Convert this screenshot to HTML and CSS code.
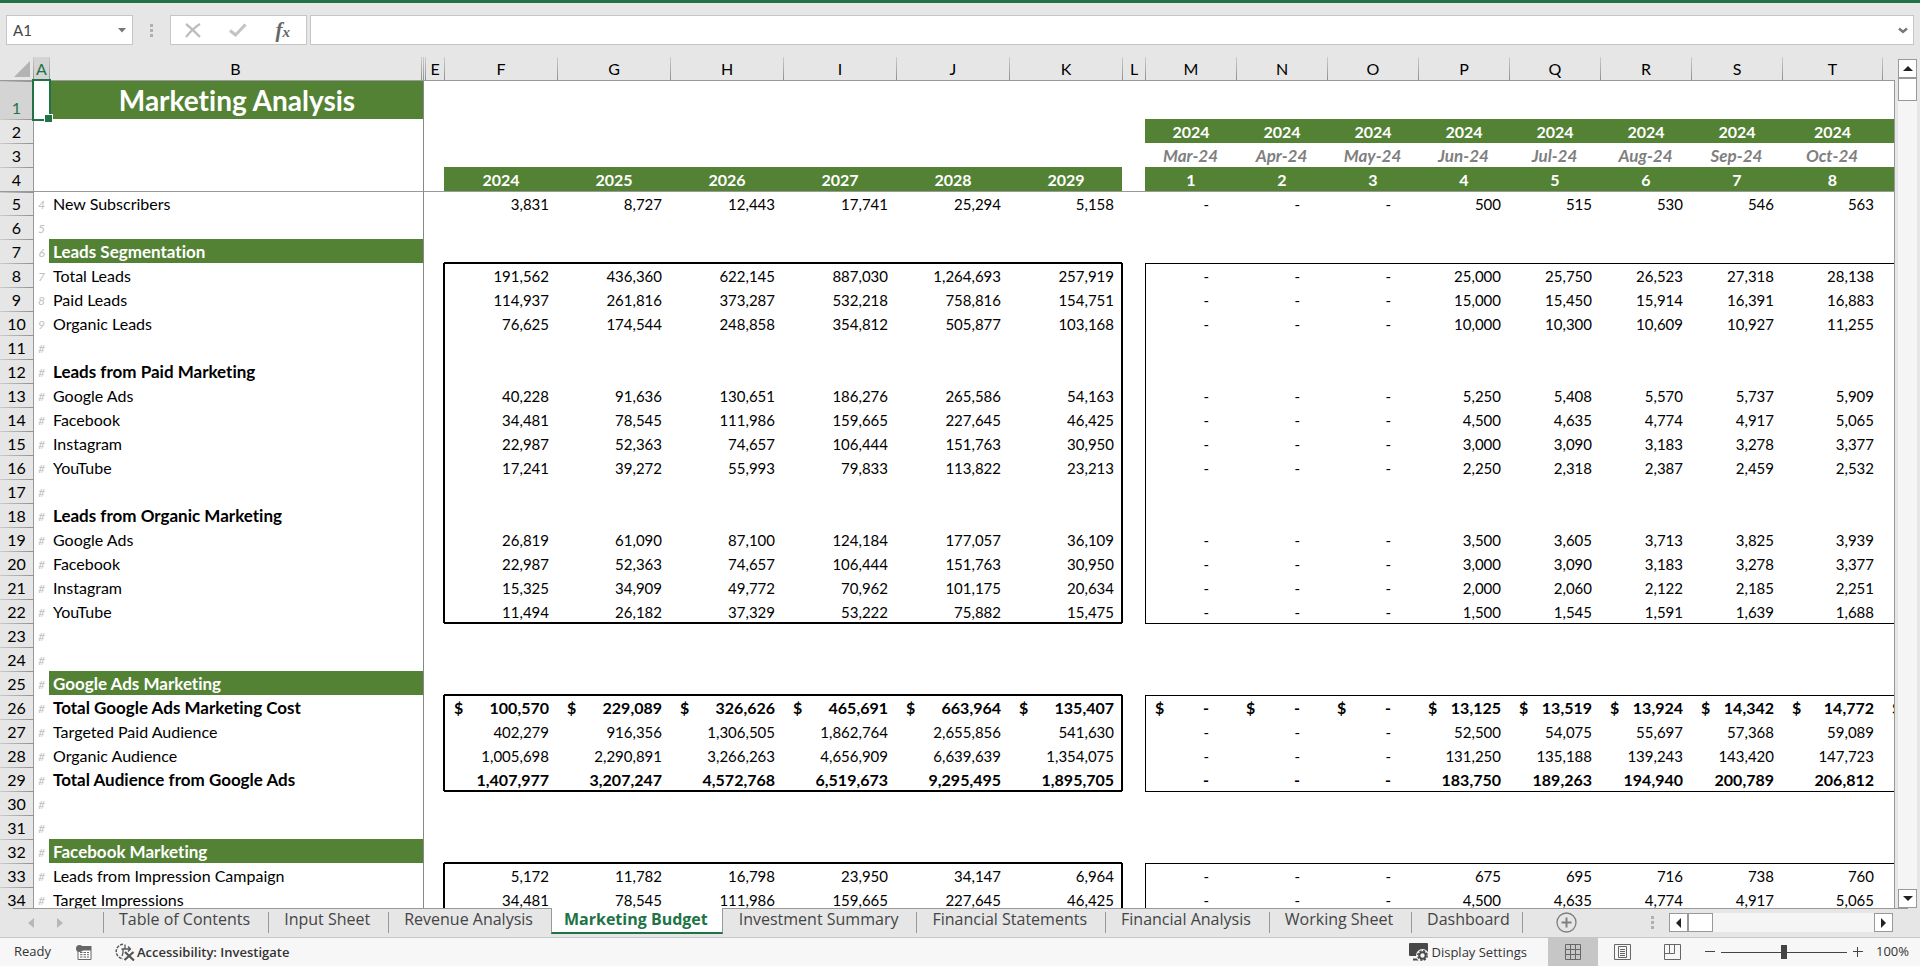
FILE: index.html
```html
<!DOCTYPE html>
<html lang="en">
<head>
<meta charset="utf-8">
<title>Marketing Analysis</title>
<link rel="stylesheet" href="styles.css">
</head>
<body>
<header class="formula-bar">
  <div class="name-box">
    <input class="name-input" type="text" value="A1" aria-label="Name box">
    <button class="plain" aria-label="Name list"><svg width="8" height="5" viewBox="0 0 8 5"><path d="M0 0h8L4 4.5z" fill="#777"/></svg></button>
  </div>
  <div class="dots"><i></i><i></i><i></i></div>
  <div class="fx-box">
    <button class="plain" aria-label="Cancel"><svg width="16" height="15" viewBox="0 0 16 15" fill="none" stroke="#bdbdbd" stroke-width="2.2"><path d="M1 1c4 3 9 8 14 13M15 1C10 4 5 9 1 14"/></svg></button>
    <button class="plain" aria-label="Enter"><svg width="18" height="14" viewBox="0 0 18 14" fill="none" stroke="#c3c3c3" stroke-width="3"><path d="M1 7.500l5.500 4.500L16.500 1.500"/></svg></button>
    <button class="plain fx" aria-label="Insert function">f<span class="fx-x">x</span></button>
  </div>
  <div class="formula-box">
    <input class="formula-input" type="text" aria-label="Formula bar">
    <button class="plain" aria-label="Expand formula bar"><svg width="10" height="7" viewBox="0 0 10 7" fill="none" stroke="#777" stroke-width="2.400"><path d="M1 1.500l4 3.500 4-3.500"/></svg></button>
  </div>
</header>

<main class="sheet">
  <div class="grid"><table class="cells" id="cells"></table></div>
  <div class="vscroll">
    <button class="scroll-btn" aria-label="Scroll up"><svg width="10" height="5" viewBox="0 0 10 5"><path d="M5 0l5 5H0z" fill="#222"/></svg></button>
    <div class="vthumb"></div>
    <div class="track"></div>
    <button class="scroll-btn" aria-label="Scroll down"><svg width="10" height="5" viewBox="0 0 10 5"><path d="M0 0h10L5 5z" fill="#222"/></svg></button>
  </div>
</main>

<nav class="tab-bar">
  <div class="tab-nav">
    <button class="plain" aria-label="Previous sheet"><svg width="6" height="10" viewBox="0 0 6 10"><path d="M6 0v10L0 5z" fill="#b8b8b8"/></svg></button>
    <button class="plain" aria-label="Next sheet"><svg width="6" height="10" viewBox="0 0 6 10"><path d="M0 0v10l6-5z" fill="#b8b8b8"/></svg></button>
  </div>
  <button class="tab">Table of Contents</button>
  <button class="tab">Input Sheet</button>
  <button class="tab">Revenue Analysis</button>
  <button class="tab active">Marketing Budget</button>
  <button class="tab">Investment Summary</button>
  <button class="tab">Financial Statements</button>
  <button class="tab">Financial Analysis</button>
  <button class="tab">Working Sheet</button>
  <button class="tab last">Dashboard</button>
  <button class="plain add" aria-label="New sheet"><svg width="21" height="21" viewBox="0 0 21 21" fill="none" stroke="#808080"><circle cx="10.500" cy="10.500" r="9.500" stroke-width="1.300"/><path d="M10.500 5.500v10M5.500 10.500h10" stroke-width="2"/></svg></button>
  <div class="tab-right">
    <div class="dots"><i></i><i></i><i></i></div>
    <div class="hscroll">
      <button class="scroll-btn" aria-label="Scroll left"><svg width="5" height="10" viewBox="0 0 5 10"><path d="M5 0v10L0 5z" fill="#222"/></svg></button>
      <div class="hthumb"></div>
      <div class="track"></div>
      <button class="scroll-btn" aria-label="Scroll right"><svg width="5" height="10" viewBox="0 0 5 10"><path d="M0 0v10l5-5z" fill="#222"/></svg></button>
    </div>
  </div>
</nav>

<footer class="status">
  <span class="ready">Ready</span>
  <button class="plain macro" aria-label="Record macro"><svg width="16" height="15" viewBox="0 0 16 15"><path d="M2 5h13v9.500H2z" fill="#fff" stroke="#666"/><path d="M6 1h9.500v4H6z" fill="#666"/><circle cx="3.500" cy="3.500" r="3.500" fill="#666"/><path d="M4 7.500h9M4 9.700h9M4 12h9" stroke="#666" stroke-dasharray="2.500 1"/></svg></button>
  <button class="plain access"><svg width="20" height="18" viewBox="0 0 20 18" fill="none" stroke="#555"><path d="M8 1.200A7.500 7.500 0 0 0 1.200 8.500A7.500 7.500 0 0 0 8 15.800" stroke-width="1.500" stroke-dasharray="3 1.200"/><path d="M10 1.500v5M6.500 6H15M13 3.500L15.500 6 13 8.500M8 6v4l-1 3" stroke-width="1.300"/><path d="M10 9l9 8.500M18.500 9L9.500 17" stroke-width="2.200"/></svg>Accessibility: Investigate</button>
  <button class="plain display"><svg width="20" height="18" viewBox="0 0 20 18"><rect width="19" height="13" rx="1" fill="#484848"/><path d="M4 16.500h6" stroke="#484848" stroke-width="2"/><circle cx="13.500" cy="12.500" r="6.500" fill="#f7f7f7"/><circle cx="13.500" cy="12.500" r="3.200" fill="none" stroke="#484848" stroke-width="2"/><circle cx="13.500" cy="12.500" r="4.700" fill="none" stroke="#484848" stroke-width="1.500" stroke-dasharray="2.200 1.490"/></svg>Display Settings</button>
  <button class="view selected" aria-label="Normal view"><svg width="16" height="16" viewBox="0 0 16 16" fill="none" stroke="#666"><path d="M.5.5h15v15H.5zM5.500.5v15M10.500.5v15M.5 5.500h15M.5 10.500h15"/></svg></button>
  <button class="view" aria-label="Page layout"><svg width="17" height="16" viewBox="0 0 17 16" fill="none" stroke="#666"><path d="M.5.5h16v15H.5zM4.500 2.500h8v11h-8zM6 5.500h5M6 7.500h5M6 9.500h5M6 11.500h5"/></svg></button>
  <button class="view" aria-label="Page break preview"><svg width="17" height="16" viewBox="0 0 17 16" fill="none" stroke="#666"><path d="M.5.5h16v15H.5zM.5 9.500h10v-9M5.500.5v9"/></svg></button>
  <div class="zoom">
    <button class="plain" aria-label="Zoom out"><svg width="10" height="10" viewBox="0 0 10 10" stroke="#444"><path d="M0 4.500h10"/></svg></button>
    <input class="slider" type="range" min="0" max="100" value="50" aria-label="Zoom">
    <button class="plain" aria-label="Zoom in"><svg width="10" height="10" viewBox="0 0 10 10" stroke="#444"><path d="M0 4.500h10M4.500 0v10"/></svg></button>
  </div>
  <span class="percent">100%</span>
</footer>
<script src="app.js"></script>
</body>
</html>
```

FILE: styles.css
```css
* { box-sizing: border-box; }
body {
  margin: 0;
  height: 100vh;
  display: flex;
  flex-direction: column;
  overflow: hidden;
  background: #e6e6e6;
  border-top: 3px solid #217346;
  font-family: Lato, "Liberation Sans", sans-serif;
  font-size: 15px;
  font-variant-ligatures: none;
  color: #000;
}
button, input { font: inherit; color: inherit; margin: 0; }
.plain {
  display: flex;
  align-items: center;
  justify-content: center;
  padding: 0;
  border: 0;
  background: none;
}

/* formula bar */
.formula-bar {
  flex: none;
  display: flex;
  align-items: center;
  padding: 12px 6px;
}
.name-box, .fx-box, .formula-box {
  display: flex;
  align-items: center;
  height: 30px;
  background: #fff;
  border: 1px solid #c6c6c6;
}
.name-box { width: 127px; padding: 0 6px; }
.name-input, .formula-input {
  flex: 1;
  min-width: 0;
  border: 0;
  padding: 0;
  outline: 0;
  background: none;
  color: #444;
}
.dots { display: flex; flex-direction: column; gap: 2px; }
.dots i { width: 3px; height: 3px; background: #b0b0b0; }
.name-box + .dots { margin: 0 17px; }
.fx-box { width: 137px; padding: 0 16px 0 14px; justify-content: space-between; margin-right: 3px; }
.fx {
  font-family: "Liberation Serif", serif;
  font-style: italic;
  font-weight: bold;
  font-size: 21px;
  line-height: 26px;
  color: #666;
}
.fx-x { font-size: 15px; padding-top: 4px; }
.formula-box { flex: 1; padding: 0 5px; }

/* cells */
.sheet { flex: 1; min-height: 0; display: flex; }
.grid {
  flex: 1;
  min-width: 0;
  overflow: hidden;
  background: linear-gradient(#e6e6e6 24px, #fff 24px);
  position: relative;
}
.cells {
  width: 100%;
  table-layout: fixed;
  border-collapse: separate;
  border-spacing: 0;
}
.cells tr { height: 24px; }
.cells tr.tall { height: 38px; }
.c-head { width: 33px; }
.c-a { width: 16px; }
.c-b { width: 372px; }
.c-hidden { width: 2px; }
.c-e { width: 19px; }
.c-year { width: 113px; }
.c-l { width: 23px; }
.c-month { width: 91px; }
.c-wide { width: 100px; }
.cells th, .cells td {
  padding: 2px 0 0;
  line-height: 21px;
  white-space: nowrap;
  vertical-align: bottom;
  font-weight: normal;
  text-align: right;
}
.cells td { border-right: 0 solid #999; }
.cells td:last-child { border-right-width: 1px; overflow: hidden; }
.cells .col {
  text-align: center;
  font-size: 16px;
  padding: 1px 0 1px 1px;
  border-bottom: 1px solid #999;
  background: linear-gradient(#ccc, #909090) left / 1px 100% no-repeat #e6e6e6;
}
.cells .corner { background: #e6e6e6; border-bottom: 1px solid #999; padding: 0 3px 3px 0; line-height: 0; }
.cells .row {
  text-align: center;
  font-size: 16px;
  border-right: 0;
  background: linear-gradient(90deg, #ccc, #909090) top / 100% 1px no-repeat #e6e6e6;
}
.cells .col.current, .cells .row.current { background-color: #d4d4d4; color: #217346; }
.cells .a {
  border-left: 1px solid #999;
  font-size: 12px;
  font-style: italic;
  color: #bfbfbf;
  padding-right: 4px;
}
.cells .b { text-align: left; padding-left: 4px; font-size: 16px; }
.cells .b.strong, .cells .b.green { font-size: 17px; }
.cells .split { border-left: 1px solid #888; }
.cells .num { padding-right: 8px; }
.cells .dash { padding-right: 27px; }
.cells .strong { font-weight: bold; font-size: 16px; }
.cells .green { background: #548235; color: #fff; font-weight: bold; }
.cells .mid { text-align: center; font-size: 16px; padding-left: 1px; }
.cells .date { font-size: 17px; font-weight: bold; font-style: italic; color: #7f7f7f; text-align: center; }
.cells .row, .cells .b, .cells .strong, .cells .mid, .cells .date { padding-top: 1px; padding-bottom: 1px; }
.cells .frozen td, .cells .frozen th { border-top: 1px solid #999; padding-top: 1px; }
.cells .title { font-size: 28px; line-height: 34px; text-align: center; padding: 0 0 2px 4px; }
.money { display: flex; justify-content: space-between; padding-left: 10px; }

/* outlines drawn around blocks of figures */
.box {
  box-shadow: var(--t, 0 0 #0000), var(--t2, 0 0 #0000), var(--r, 0 0 #0000), var(--r2, 0 0 #0000),
    var(--b, 0 0 #0000), var(--b2, 0 0 #0000), var(--l, 0 0 #0000), var(--l2, 0 0 #0000);
}
.box.top { --t: inset 0 1px #000; }
.box.bottom { --b: 0 1px #000; }
.box.left { --l: inset 1px 0 #000; }
.box.thick.top { --t2: 0 -1px #000; }
.box.thick.bottom { --b2: inset 0 -1px #000; }
.box.thick.left { --l2: -1px 0 #000; }
.box.thick.right { --r: 1px 0 #000; --r2: inset -1px 0 #000; }

.cells .picked { position: relative; }
.cursor { position: absolute; inset: -2px; border: 2px solid #217346; background: #fff; }
.cursor::after {
  content: "";
  position: absolute;
  right: -4px;
  bottom: -4px;
  width: 7px;
  height: 7px;
  border: 1px solid #fff;
  background: #217346;
}

/* scroll bars */
.vscroll { width: 19px; margin: 2px 3px 0; display: flex; flex-direction: column; }
.scroll-btn {
  flex: none;
  width: 19px;
  height: 19px;
  display: flex;
  align-items: center;
  justify-content: center;
  padding: 0;
  background: #fff;
  border: 1px solid #999;
}
.vthumb { height: 23px; background: #fff; border: 1px solid #999; }
.track { flex: 1; background: #f5f5f5; }
.hscroll { display: flex; width: 224px; }
.hthumb { width: 25px; background: #fff; border: 1px solid #999; }

/* sheet tabs */
.tab-bar {
  flex: none;
  height: 29px;
  display: flex;
  align-items: flex-start;
  padding-right: 27px;
  font-family: "Open Sans", "Noto Sans", sans-serif;
  font-size: 16px;
  color: #444;
  background: linear-gradient(#999, #999) top / 1895px 1px no-repeat;
}
.tab-nav { display: flex; gap: 23px; width: 103px; height: 29px; padding-left: 28px; }
.tab {
  height: 21px;
  margin-top: 4px;
  padding: 0 18px 6px 15px;
  line-height: 15px;
  border: 0;
  border-left: 1px solid #999;
  background: none;
  white-space: nowrap;
}
.tab.active {
  height: 26px;
  margin-top: 0;
  padding: 4px 14px 5px 12px;
  background: #fff;
  border: 1px solid #999;
  border-width: 0 1px;
  border-bottom: 2px solid #217346;
  color: #217346;
  font-weight: bold;
}
.tab.active + .tab { border-left-color: transparent; }
.tab.last { border-right: 1px solid #999; padding: 0 12px 6px 15px; }
.add { margin: 4px 0 0 33px; }
.tab-right { margin-left: auto; display: flex; align-items: center; gap: 15px; padding-top: 5px; }

/* status bar */
.status {
  flex: none;
  height: 29px;
  display: flex;
  align-items: center;
  padding: 0 11px 0 14px;
  border-top: 1px solid #c6c6c6;
  background: #f7f7f7;
  font-family: "Open Sans", "Noto Sans", sans-serif;
  font-size: 13px;
  line-height: 18px;
  color: #333;
}
.ready, .percent { padding-bottom: 2px; }
.macro { margin: 0 23px 0 25px; }
.access { gap: 2px; font-weight: 600; }
.display { margin-left: auto; margin-right: 21px; gap: 2px; }
.view {
  width: 50px;
  height: 28px;
  display: flex;
  align-items: center;
  justify-content: center;
  padding: 0;
  border: 0;
  background: none;
}
.view.selected { background: #c6c6c6; }
.zoom { display: flex; align-items: center; gap: 6px; margin-left: 7px; }
.slider {
  appearance: none;
  width: 126px;
  height: 16px;
  background: linear-gradient(#444, #444) center / 100% 1px no-repeat;
}
.slider::-webkit-slider-thumb { appearance: none; width: 6px; height: 14px; background: #444; }
.percent { margin-left: 13px; }
```

FILE: app.js
```js
// Column letters with the class that sets each width.
const columns = [
  ["", "c-head"], ["A", "c-a"], ["B", "c-b"], ["", "c-hidden"], ["", "c-hidden"], ["E", "c-e"],
  ..."FGHIJK".split("").map((c) => [c, "c-year"]),
  ["L", "c-l"],
  ..."MNOPQRS".split("").map((c) => [c, "c-month"]),
  ["T", "c-wide"], ["", "c-rest"],
];

// Row number -> [label, yearly figures F-K, monthly figures P-T, bold?, currency?]
const rows = {
  5: ["New Subscribers", "3,831 8,727 12,443 17,741 25,294 5,158", "500 515 530 546 563"],
  8: ["Total Leads", "191,562 436,360 622,145 887,030 1,264,693 257,919", "25,000 25,750 26,523 27,318 28,138"],
  9: ["Paid Leads", "114,937 261,816 373,287 532,218 758,816 154,751", "15,000 15,450 15,914 16,391 16,883"],
  10: ["Organic Leads", "76,625 174,544 248,858 354,812 505,877 103,168", "10,000 10,300 10,609 10,927 11,255"],
  12: ["Leads from Paid Marketing", "", "", true],
  13: ["Google Ads", "40,228 91,636 130,651 186,276 265,586 54,163", "5,250 5,408 5,570 5,737 5,909"],
  14: ["Facebook", "34,481 78,545 111,986 159,665 227,645 46,425", "4,500 4,635 4,774 4,917 5,065"],
  15: ["Instagram", "22,987 52,363 74,657 106,444 151,763 30,950", "3,000 3,090 3,183 3,278 3,377"],
  16: ["YouTube", "17,241 39,272 55,993 79,833 113,822 23,213", "2,250 2,318 2,387 2,459 2,532"],
  18: ["Leads from Organic Marketing", "", "", true],
  19: ["Google Ads", "26,819 61,090 87,100 124,184 177,057 36,109", "3,500 3,605 3,713 3,825 3,939"],
  20: ["Facebook", "22,987 52,363 74,657 106,444 151,763 30,950", "3,000 3,090 3,183 3,278 3,377"],
  21: ["Instagram", "15,325 34,909 49,772 70,962 101,175 20,634", "2,000 2,060 2,122 2,185 2,251"],
  22: ["YouTube", "11,494 26,182 37,329 53,222 75,882 15,475", "1,500 1,545 1,591 1,639 1,688"],
  26: ["Total Google Ads Marketing Cost", "100,570 229,089 326,626 465,691 663,964 135,407", "13,125 13,519 13,924 14,342 14,772", true, true],
  27: ["Targeted Paid Audience", "402,279 916,356 1,306,505 1,862,764 2,655,856 541,630", "52,500 54,075 55,697 57,368 59,089"],
  28: ["Organic Audience", "1,005,698 2,290,891 3,266,263 4,656,909 6,639,639 1,354,075", "131,250 135,188 139,243 143,420 147,723"],
  29: ["Total Audience from Google Ads", "1,407,977 3,207,247 4,572,768 6,519,673 9,295,495 1,895,705", "183,750 189,263 194,940 200,789 206,812", true],
  33: ["Leads from Impression Campaign", "5,172 11,782 16,798 23,950 34,147 6,964", "675 695 716 738 760"],
  34: ["Target Impressions", "34,481 78,545 111,986 159,665 227,645 46,425", "4,500 4,635 4,774 4,917 5,065"],
};
const sections = { 7: "Leads Segmentation", 25: "Google Ads Marketing", 32: "Facebook Marketing" };
const boxes = [[8, 22], [26, 29], [33, 40]];
const months = "Mar Apr May Jun Jul Aug Sep Oct".split(" ");
const FIRST_YEAR = 6, LAST_YEAR = 11, FIRST_MONTH = 13, LAST_MONTH = 20, REST = 21;

function boxClasses(row, col) {
  const box = boxes.find(([from, to]) => row >= from && row <= to);
  const yearly = col >= FIRST_YEAR && col <= LAST_YEAR;
  if (!box || !(yearly || col >= FIRST_MONTH)) return "";
  const out = ["box"];
  if (yearly) out.push("thick");
  if (row === box[0]) out.push("top");
  if (row === box[1]) out.push("bottom");
  if (col === FIRST_YEAR || col === FIRST_MONTH) out.push("left");
  if (col === LAST_YEAR) out.push("right");
  return out.join(" ");
}

function cell(row, col) {
  const isYear = col >= FIRST_YEAR && col <= LAST_YEAR;
  const isMonth = col >= FIRST_MONTH && col <= LAST_MONTH;
  const data = rows[row];
  let cls = "", html = "";
  if (col === 1) {
    cls = "a";
    if (row === 1) { cls += " picked"; html = '<div class="cursor"></div>'; }
    if (row > 4) html = row <= 10 ? row - 1 : "#";
  } else if (col === 2) {
    cls = "b";
    if (row === 1) { cls = "green title"; html = "Marketing Analysis"; }
    if (sections[row]) { cls = "b green"; html = sections[row]; }
    if (data) { html = data[0]; if (data[3]) cls += " strong"; }
  } else if (col === 3) {
    if (row === 1 || sections[row]) cls = "green";
  } else if (col === 4) {
    cls = "split";
  } else if (row === 4 && isYear) {
    cls = "green mid"; html = 2024 + col - FIRST_YEAR;
  } else if ((row === 2 || row === 4) && col >= FIRST_MONTH) {
    cls = "green mid";
    if (isMonth) html = row === 2 ? 2024 : col - FIRST_MONTH + 1;
  } else if (row === 3 && isMonth) {
    cls = "date"; html = months[col - FIRST_MONTH] + "-24";
  } else if (data && data[1] && (isYear || isMonth)) {
    const m = col - FIRST_MONTH;
    const value = isYear ? data[1].split(" ")[col - FIRST_YEAR] : m < 3 ? "-" : data[2].split(" ")[m - 3];
    cls = (value === "-" ? "dash" : "num") + (data[3] ? " strong" : "");
    html = data[4] ? `<div class="money"><span>$</span><span>${value}</span></div>` : value;
  } else if (col === REST && data && data[4]) {
    cls = "strong"; html = '<div class="money">$</div>';
  }
  return `<td class="${(cls + " " + boxClasses(row, col)).trim()}">${html}</td>`;
}

let out = "<colgroup>" + columns.map(([, c]) => `<col class="${c}">`).join("") + "</colgroup><thead><tr>";
out += '<th class="corner"><svg width="16" height="16" viewBox="0 0 16 16"><path d="M16 0v16H0z" fill="#b3b3b3"/></svg></th>';
columns.slice(1).forEach(([letter], i) => {
  out += `<th scope="col" class="col${i === 0 ? " current" : ""}">${letter}</th>`;
});
out += "</tr></thead><tbody>";
for (let r = 1; r <= 34; r++) {
  const trClass = r === 1 ? "tall" : r === 5 ? "frozen" : "";
  out += `<tr class="${trClass}"><th scope="row" class="row${r === 1 ? " current" : ""}">${r}</th>`;
  for (let c = 1; c <= REST; c++) out += cell(r, c);
  out += "</tr>";
}
document.getElementById("cells").innerHTML = out + "</tbody>";
```
